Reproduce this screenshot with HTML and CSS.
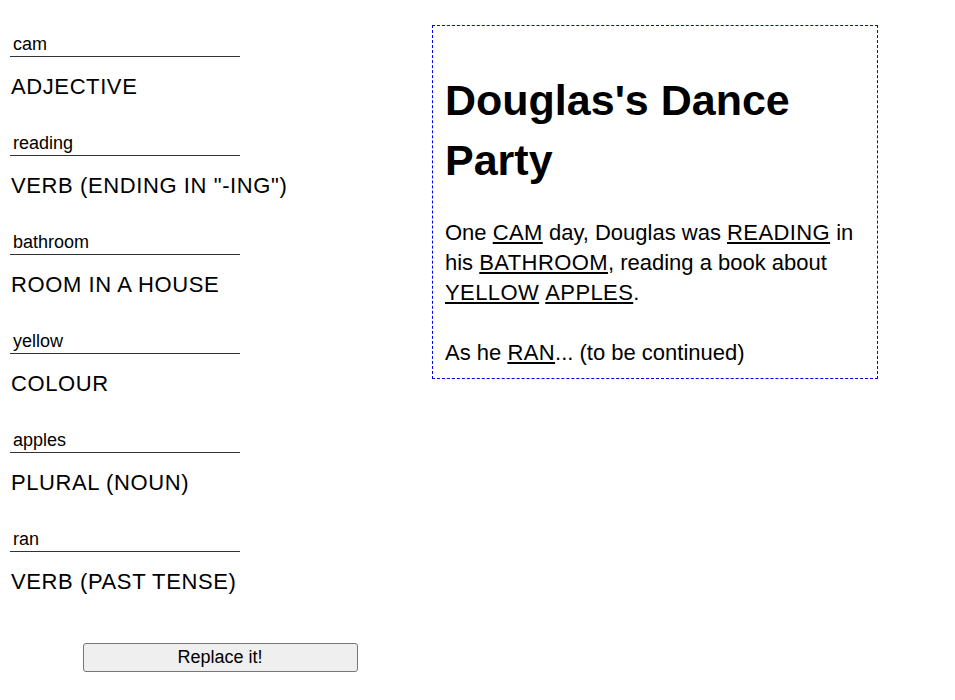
FILE: index.html
```html
<!DOCTYPE html>
<html>
<head>
<meta charset="utf-8">
<title>Douglas's Dance Party</title>
<link rel="stylesheet" href="styles.css">
</head>
<body>
<div class="page">
  <form class="words">
    <div class="field"><input class="word" type="text" value="cam"><div class="hint">ADJECTIVE</div></div>
    <div class="field"><input class="word" type="text" value="reading"><div class="hint">VERB (ENDING IN "-ING")</div></div>
    <div class="field"><input class="word" type="text" value="bathroom"><div class="hint">ROOM IN A HOUSE</div></div>
    <div class="field"><input class="word" type="text" value="yellow"><div class="hint">COLOUR</div></div>
    <div class="field"><input class="word" type="text" value="apples"><div class="hint">PLURAL (NOUN)</div></div>
    <div class="field"><input class="word" type="text" value="ran"><div class="hint">VERB (PAST TENSE)</div></div>
    <button class="replace" type="button">Replace it!</button>
  </form>
  <div class="story">
    <h1 class="title">Douglas's Dance Party</h1>
    <p class="para">One <u class="fill">CAM</u> day, Douglas was <u class="fill">READING</u> in his <u class="fill">BATHROOM</u>, reading a book about <u class="fill">YELLOW</u> <u class="fill">APPLES</u>.</p>
    <p class="para next">As he <u class="fill">RAN</u>... (to be continued)</p>
  </div>
</div>
</body>
</html>
```
FILE: styles.css
```css
html, body {
  margin: 0;
  padding: 0;
  background: #ffffff;
}
body {
  padding: 8px;
  color: #000;
  font-family: "Comic Sans MS", "Liberation Sans", sans-serif;
}
.page {
  display: flex;
  align-items: flex-start;
}
.words {
  width: 424px;
  display: flex;
  flex-direction: column;
  padding-top: 25px;
}
.field {
  display: flex;
  flex-direction: column;
  margin-bottom: 31px;
}
.word {
  box-sizing: border-box;
  width: 230px;
  height: 24px;
  margin: 0 0 0 2px;
  padding: 0 2px 0 3px;
  border: none;
  border-bottom: 1px solid #333;
  outline: none;
  font-family: "Liberation Sans", Arial, sans-serif;
  font-size: 18px;
  color: #000;
  background: transparent;
}
.hint {
  margin-top: 16px;
  margin-left: 3px;
  font-size: 22px;
  line-height: 28px;
  letter-spacing: 0.6px;
}
.replace {
  align-self: center;
  width: 275px;
  height: 29px;
  margin-top: 16px;
  padding: 0;
  background: #efefef;
  border: 1px solid #767676;
  border-radius: 3px;
  font-family: "Liberation Sans", Arial, sans-serif;
  font-size: 18px;
  color: #000;
}
.story {
  box-sizing: border-box;
  width: 446px;
  margin-top: 17px;
  padding: 0 12px 10px;
  border: 1px dashed #0000ff;
}
.title {
  margin: 44px 0 28px;
  font-size: 43px;
  line-height: 60px;
  font-weight: bold;
}
.para {
  margin: 0;
  font-size: 22px;
  line-height: 30px;
}
.para.next {
  margin-top: 30px;
}
.fill {
  letter-spacing: 0.4px;
}
```
